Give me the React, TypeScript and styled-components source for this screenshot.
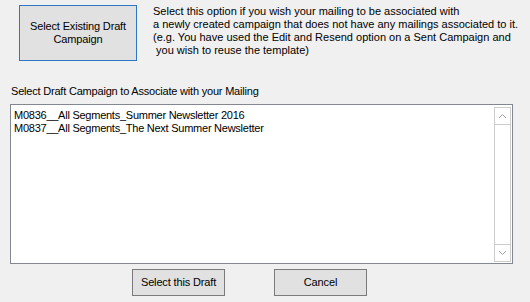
import styled, { createGlobalStyle } from "styled-components";

const GlobalStyle = createGlobalStyle`
    html, body {
        margin: 0;
        padding: 0;
        background: #f0f0f0;
    }
    body {
        font-family: "Liberation Sans", Arial, sans-serif;
        font-size: 11px;
        color: #000;
    }
`

const Page = styled.div`
    width: 530px;
    height: 302px;
    padding-top: 5px;
    box-sizing: border-box;
    background: #f0f0f0;
    overflow: hidden;
`

const TopRow = styled.div`
    display: flex;
    align-items: flex-start;
    padding-left: 19px;
    gap: 16px;
`

const WinButton = styled.button<{ $w: number; $h: number; $focused?: boolean }>`
    width: ${props => props.$w}px;
    height: ${props => props.$h}px;
    box-sizing: border-box;
    background: #e1e1e1;
    border: 1px solid ${props => props.$focused ? "#2f76c6" : "#7a7a7a"};
    border-radius: 0;
    padding: 0 4px;
    font-family: inherit;
    font-size: 11px;
    line-height: 13px;
    letter-spacing: -0.15px;
    color: #000;
    text-align: center;
`

const Description = styled.div`
    line-height: 13px;
    white-space: pre;
`

const Label = styled.div`
    margin-top: 24px;
    padding-left: 11px;
    line-height: 13px;
    letter-spacing: -0.2px;
`

const ListBox = styled.div`
    margin: 6px 0 0 10px;
    width: 503px;
    height: 160px;
    box-sizing: border-box;
    border: 1px solid #828790;
    background: #fff;
    padding: 1px;
    display: flex;
`

const Items = styled.div`
    flex: 1;
    padding: 3px 0 0 2px;
    line-height: 13px;
    letter-spacing: -0.25px;
`

const ScrollBar = styled.div`
    width: 17px;
    display: flex;
    flex-direction: column;
    border: 1px solid #cdcdcd;
    box-sizing: border-box;
    margin-top: 1px;
`

const Arrow = styled.div`
    height: 16px;
    display: flex;
    align-items: center;
    justify-content: center;
`

const Track = styled.div`
    flex: 1;
    border-top: 1px solid #cdcdcd;
    border-bottom: 1px solid #cdcdcd;
`

const ButtonRow = styled.div`
    display: flex;
    gap: 49px;
    padding-left: 132px;
    margin-top: 5px;
`

const Chevron = ({ up }: { up?: boolean }) => (
    <svg width="9" height="6" viewBox="0 0 9 6">
        <polyline
            points={up ? "1,5 4.5,1.5 8,5" : "1,1 4.5,4.5 8,1"}
            fill="none"
            stroke="#a0a0a0"
            strokeWidth="1"
        />
    </svg>
)

const App = () => {
    return (
        <Page>
            <GlobalStyle />
            <TopRow>
                <WinButton $w={118} $h={56} $focused>
                    Select Existing Draft<br />Campaign
                </WinButton>
                <Description>
                    {"Select this option if you wish your mailing to be associated with\n" +
                        "a newly created campaign that does not have any mailings associated to it.\n" +
                        "(e.g. You have used the Edit and Resend option on a Sent Campaign and\n" +
                        " you wish to reuse the template)"}
                </Description>
            </TopRow>
            <Label>Select Draft Campaign to Associate with your Mailing</Label>
            <ListBox>
                <Items>
                    <div>M0836__All Segments_Summer Newsletter 2016</div>
                    <div>M0837__All Segments_The Next Summer Newsletter</div>
                </Items>
                <ScrollBar>
                    <Arrow><Chevron up /></Arrow>
                    <Track />
                    <Arrow><Chevron /></Arrow>
                </ScrollBar>
            </ListBox>
            <ButtonRow>
                <WinButton $w={93} $h={27}>Select this Draft</WinButton>
                <WinButton $w={93} $h={27}>Cancel</WinButton>
            </ButtonRow>
        </Page>
    )
}

export default App;
